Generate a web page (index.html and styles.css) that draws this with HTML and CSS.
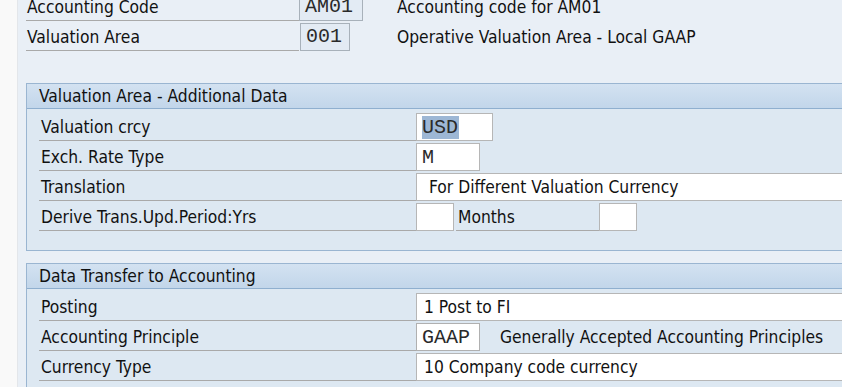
FILE: index.html
```html
<!DOCTYPE html>
<html lang="en">
<head>
  <meta charset="UTF-8">
  <title>Valuation Area</title>
  <link rel="stylesheet" href="styles.css">
</head>
<body>
  <div class="screen">
    <div class="edge"></div>

    <div class="main">
      <!-- Header fields -->
      <div class="top">
        <div class="row">
          <div class="label">Accounting Code</div>
          <div class="slot"><div class="field ro mono w64">AM01</div></div>
          <div class="desc">Accounting code for AM01</div>
        </div>
        <div class="row">
          <div class="label">Valuation Area</div>
          <div class="slot"><div class="field ro mono w50 shift">001</div></div>
          <div class="desc">Operative Valuation Area - Local GAAP</div>
        </div>
      </div>

      <!-- Valuation Area - Additional Data -->
      <section class="group">
        <div class="group-title">Valuation Area - Additional Data</div>
        <div class="group-body">
          <div class="row">
            <div class="label">Valuation crcy</div>
            <div class="field mono w77"><span class="sel">USD</span></div>
          </div>
          <div class="row">
            <div class="label">Exch. Rate Type</div>
            <div class="field mono w64">M</div>
          </div>
          <div class="row">
            <div class="label">Translation</div>
            <div class="field wide combo">For Different Valuation Currency</div>
          </div>
          <div class="row">
            <div class="label">Derive Trans.Upd.Period:Yrs</div>
            <div class="field w38"></div>
            <div class="label sub">Months</div>
            <div class="field w38"></div>
          </div>
        </div>
      </section>

      <!-- Data Transfer to Accounting -->
      <section class="group">
        <div class="group-title">Data Transfer to Accounting</div>
        <div class="group-body">
          <div class="row">
            <div class="label">Posting</div>
            <div class="field wide">1 Post to FI</div>
          </div>
          <div class="row">
            <div class="label">Accounting Principle</div>
            <div class="field ro-white mono w64">GAAP</div>
            <div class="desc gap">Generally Accepted Accounting Principles</div>
          </div>
          <div class="row">
            <div class="label">Currency Type</div>
            <div class="field wide">10 Company code currency</div>
          </div>
        </div>
      </section>
    </div>
  </div>
</body>
</html>
```

FILE: styles.css
```css
body {
  margin: 0;
  font-family: "DejaVu Sans Condensed", "DejaVu Sans", sans-serif;
  font-size: 17.3px;
  color: #111;
  background-color: #e9eff6;
  overflow: hidden;
}

.screen {
  display: flex;
  height: 387px;
}

.edge {
  flex: none;
  width: 17px;
  background-color: #f9f9f9;
  border-right: 1px solid #e3e6ea;
}

.main {
  flex: 1;
  padding-left: 8px;
  overflow: hidden;
}

.top {
  margin-top: -7px;
  display: flex;
  flex-direction: column;
  gap: 2px;
  line-height: 14px;
}

.row {
  display: flex;
  height: 28px;
}

.label {
  flex: none;
  box-sizing: border-box;
  display: flex;
  align-items: center;
  border-bottom: 1px solid #a9a9a9;
  white-space: nowrap;
}

.top .label {
  width: 273px;
  padding-left: 1px;
}

.slot {
  flex: none;
  width: 98px;
  display: flex;
}

.desc {
  display: flex;
  align-items: center;
  white-space: nowrap;
}

.desc.gap {
  margin-left: 20px;
}

/* Group boxes */
.group {
  width: 900px;
  margin-top: 32px;
  border: 1px solid #9ab5d1;
  background-color: #dde8f2;
}

.group + .group {
  margin-top: 12px;
}

.group-title {
  height: 24px;
  padding-left: 12px;
  display: flex;
  align-items: center;
  border-bottom: 1px solid #8fafcf;
  background: linear-gradient(#d3e2f1, #c2d6ea);
}

.group-body {
  padding: 4px 0 19px 12px;
  display: flex;
  flex-direction: column;
  gap: 2px;
}

.group .label {
  width: 377px;
  padding-left: 2px;
}

.group .label.sub {
  width: 143px;
  margin-left: 2px;
}

/* Fields */
.field {
  flex: none;
  box-sizing: border-box;
  height: 28px;
  display: flex;
  align-items: center;
  padding-left: 7px;
  border: 1px solid #b6b6b6;
  background-color: #fff;
  white-space: nowrap;
}

.field.ro {
  background-color: #e3ebf4;
  border-color: #a8b1ba;
}

.field.ro-white {
  border-color: #b0b0b0;
}

.field.shift {
  margin-left: 1px;
}

.mono {
  font-family: "Liberation Mono", monospace;
  font-size: 20px;
  color: #2a2a2a;
  padding-left: 5px;
}

.field.combo {
  padding-left: 12px;
}

.w38 { width: 38px; }
.w50 { width: 50px; }
.w64 { width: 64px; }
.w77 { width: 77px; }
.wide { flex: 1; }

.sel {
  background-color: #9db7d5;
  line-height: 23px;
  padding-right: 1px;
}
```
